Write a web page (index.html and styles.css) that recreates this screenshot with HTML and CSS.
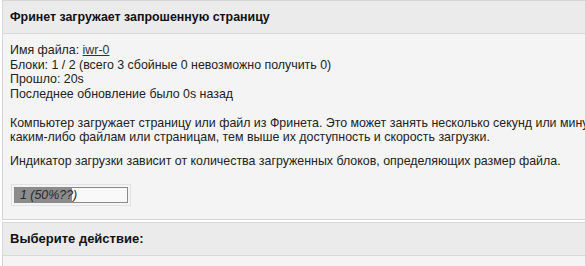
FILE: index.html
```html
<!DOCTYPE html>
<html lang="ru">
<head>
<meta charset="utf-8">
<title>Фринет</title>
<link rel="stylesheet" href="styles.css">
</head>
<body>
<div class="box">
  <div class="box-header header-main">Фринет загружает запрошенную страницу</div>
  <div class="box-content">
    <div class="info">
      <div>Имя файла: <a href="#" class="file">iwr-0</a></div>
      <div>Блоки: 1 / 2 (всего 3 сбойные 0 невозможно получить 0)</div>
      <div>Прошло: 20s</div>
      <div>Последнее обновление было 0s назад</div>
    </div>
    <p class="para-1">Компьютер загружает страницу или файл из Фринета. Это может занять несколько секунд или минут, в зависимости от размера файла и скорости сети. Чем чаще обращаются к <span class="nowrap">каким-либо</span> файлам или страницам, тем выше их доступность и скорость загрузки.</p>
    <p class="para-2">Индикатор загрузки зависит от количества загруженных блоков, определяющих размер файла.</p>
    <div class="progress">
      <div class="progress-fill" style="width: 51%"></div>
      <span class="progress-text">1 (50%??)</span>
    </div>
  </div>
</div>
<div class="box box-second">
  <div class="box-header">Выберите действие:</div>
  <div class="box-content"></div>
</div>
</body>
</html>
```

FILE: styles.css
```css
html, body {
  margin: 0;
  padding: 0;
  background: #ffffff;
  overflow: hidden;
}

body {
  font-family: "Liberation Sans", Arial, sans-serif;
  font-size: 12.4px;
  color: #222222;
}

.box {
  margin-left: 2px;
  width: 1060px;
  border: 1px solid #d6d6d6;
  background: #f4f4f4;
}

.box-second {
  margin-top: 2px;
}

.box-header {
  background: #ebebeb;
  border-bottom: 1px solid #d9d9d9;
  padding: 8px 7px;
  font-weight: bold;
  font-size: 13px;
  line-height: 16px;
  color: #111111;
}

.header-main {
  font-size: 12.4px;
}

.box-content {
  padding: 9px 7px 16px;
  line-height: 14.5px;
}

.nowrap {
  white-space: nowrap;
}

.file {
  color: #333333;
  text-decoration: underline;
}

.para-1 {
  margin: 14.5px 0 0;
}

.para-2 {
  margin: 9px 0 0;
}

.progress {
  position: relative;
  margin: 19px 0 0 4px;
  width: 112px;
  height: 14px;
  border: 1px solid #8a8a8a;
  background: #f9f9f9;
  outline: 1px solid #e2e2e2;
  outline-offset: 2px;
}

.progress-fill {
  height: 100%;
  background: #8c8c8c;
}

.progress-text {
  position: absolute;
  left: 5px;
  top: 0;
  line-height: 14px;
  font-style: italic;
  color: #2a2a2a;
}
```
